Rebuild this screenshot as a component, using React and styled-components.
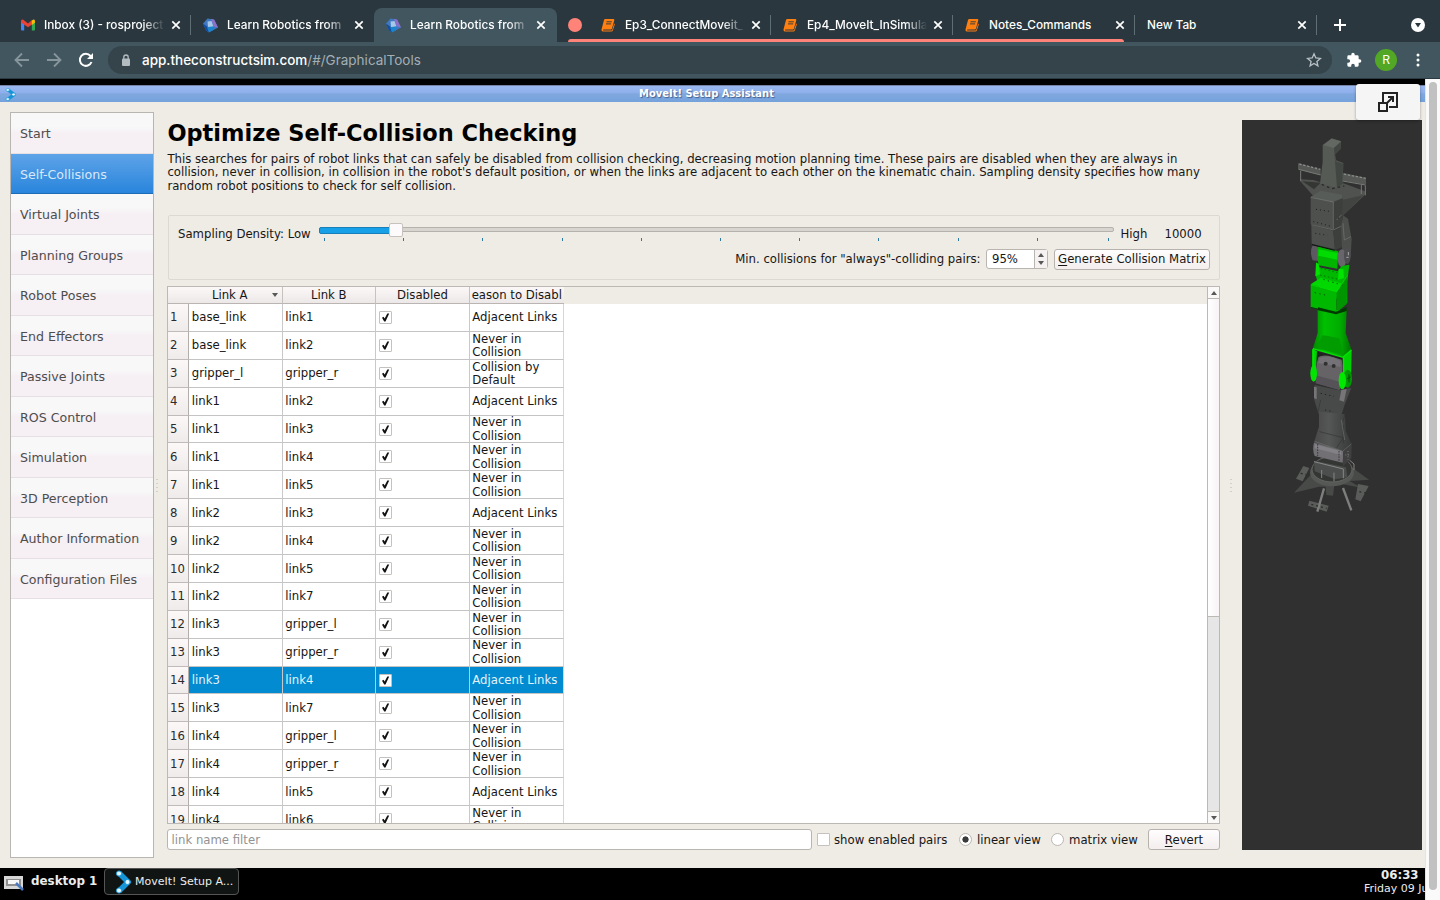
import React from "react";
import styled, { createGlobalStyle, css } from "styled-components";

const Global = createGlobalStyle`
  * { box-sizing: border-box; }
  html, body { margin: 0; padding: 0; background: #000; overflow: hidden; }
`;

const qtFont = `"DejaVu Sans", sans-serif`;
const uiFont = `Inter, Roboto, sans-serif`;

const Screen = styled.div`
  width: 1440px;
  height: 900px;
  overflow: hidden;
  display: flex;
  flex-direction: column;
  font-family: ${qtFont};
  font-size: 11.7px;
  color: #161616;
`;

/* ---------- browser chrome ---------- */

const TabStrip = styled.div`
  height: 42px;
  flex: none;
  display: flex;
  align-items: stretch;
  padding-left: 9px;
  background: #2a373e;
  font-family: ${uiFont};
`;

const Tab = styled.div`
  width: ${(p) => p.$w || 182}px;
  flex: none;
  display: flex;
  align-items: center;
  padding: 8px 9px 0 12px;
  gap: 9px;
  position: relative;
  color: #fff;
  ${(p) =>
    p.$active
      ? css`
          margin-top: 8px;
          padding-top: 0;
          padding-right: 10px;
          padding-left: 12px;
          background: #41565f;
          border-radius: 8px 8px 0 0;
        `
      : css`
          &::after {
            content: "";
            position: absolute;
            right: 0;
            top: 15px;
            width: 1px;
            height: 20px;
            background: ${p.$noSep ? "transparent" : "#5f6d75"};
          }
        `}
`;

const TabLabel = styled.span`
  flex: 1;
  min-width: 0;
  margin-right: -4px;
  padding-left: ${(p) => p.$pl ?? 1}px;
  overflow: hidden;
  white-space: nowrap;
  font-size: 11.8px;
  font-weight: 500;
  line-height: 18px;
  mask-image: ${(p) => (p.$full ? "none" : "linear-gradient(90deg, #000 82%, transparent 100%)")};
`;

const TabGroup = styled.div`
  display: flex;
  position: relative;
  padding-left: 21px;
  margin-left: 11px;
  &::before {
    content: "";
    position: absolute;
    left: 0;
    top: 18px;
    width: 14px;
    height: 14px;
    border-radius: 50%;
    background: #ff8378;
  }
  &::after {
    content: "";
    position: absolute;
    left: 0;
    right: 11px;
    bottom: 0;
    height: 3px;
    border-radius: 3px 3px 0 0;
    background: #ff8378;
  }
`;

const StripEnd = styled.div`
  flex: 1;
  display: flex;
  align-items: center;
  justify-content: space-between;
  padding: 8px 15px 0 16px;
`;

const Toolbar = styled.div`
  height: 37px;
  flex: none;
  display: flex;
  align-items: center;
  padding: 0 14px;
  background: #41565f;
  border-bottom: 1px solid #2c3a41;
  font-family: ${uiFont};
`;

const NavIcons = styled.div`
  display: flex;
  gap: 16px;
  width: 94px;
`;

const Omnibox = styled.div`
  flex: none;
  width: 1224px;
  height: 28px;
  display: flex;
  align-items: center;
  padding: 0 10px 0 13px;
  border-radius: 14px;
  background: #35444b;
`;

const Address = styled.span`
  flex: 1;
  margin-left: 11px;
  font-size: 13.5px;
  color: #a4afb4;
  b { font-weight: 500; color: #fff; }
`;

const ToolbarEnd = styled.div`
  flex: 1;
  display: flex;
  align-items: center;
  justify-content: space-between;
  margin: 0 0 0 14px;
`;

const Avatar = styled.span`
  width: 22px;
  height: 22px;
  border-radius: 50%;
  background: #52a725;
  color: #fff;
  font-size: 12px;
  line-height: 22px;
  text-align: center;
`;

/* ---------- remote desktop ---------- */

const Page = styled.div`
  flex: 1;
  min-height: 0;
  display: flex;
  position: relative;
`;

const Desktop = styled.div`
  width: 1425px;
  display: flex;
  flex-direction: column;
  background: #000;
  padding-top: 6px;
  overflow: hidden;
`;

const PageScroll = styled.div`
  width: 15px;
  background: #fafafa;
  border-left: 1px solid #e4e4e4;
  padding: 3px 2px 0 3px;
`;

const PageThumb = styled.div`
  width: 8px;
  height: 808px;
  border-radius: 4px;
  background: #c1c1c1;
`;

const TitleBar = styled.div`
  height: 17px;
  flex: none;
  display: flex;
  align-items: center;
  padding-left: 5px;
  border-top: 1px solid #7481a4;
  background: linear-gradient(#9ab8f0, #8fb0ec 40%, #80a8de 50%, #74a2dc);
`;

const Title = styled.div`
  flex: 1;
  text-align: center;
  padding: 0 28px 0 0;
  font-weight: 700;
  font-size: 9.95px;
  line-height: 14px;
  color: #fff;
  text-shadow: 1px 1px 1px #44608f;
`;

const Win = styled.div`
  height: 766px;
  flex: none;
  display: flex;
  background: #efebe5;
  padding: 10px 3px 10px 10px;
`;

const SideList = styled.div`
  width: 144px;
  flex: none;
  background: #fff;
  border: 1px solid #b9b5b1;
`;

const SideItem = styled.div`
  height: 40.5px;
  padding: 1.600px 9px 0;
  display: flex;
  align-items: center;
  font-size: 12.6px;
  white-space: nowrap;
  color: ${(p) => (p.$on ? "#d9e8f8" : "#4d4d4d")};
  background: ${(p) =>
    p.$on ? "linear-gradient(#5ea3e8, #2985dc)" : "linear-gradient(#f8f8f8 0 35%, #f6f0f5 50%)"};
  border-bottom: 1px solid ${(p) => (p.$on ? "#1e6cb5" : "#e6e0e5")};
`;

const Grip = styled.div`
  width: ${(p) => p.$w}px;
  flex: none;
  display: flex;
  align-items: center;
  justify-content: center;
  padding: 4px ${(p) => p.$shift || 0}px 0 0;
  &::before {
    content: "";
    width: 2px;
    height: 16px;
    background: repeating-linear-gradient(#d3cfca 0 1px, transparent 1px 4px);
  }
`;

const Main = styled.div`
  width: 1053px;
  flex: none;
  display: flex;
  flex-direction: column;
`;

const Heading = styled.h1`
  margin: 5px 0 0;
  height: 33px;
  padding-left: 0.4px;
  font-size: 22.48px;
  line-height: 32px;
  font-weight: 700;
  color: #000;
`;

const Intro = styled.p`
  margin: 2.500px 0 0;
  height: 62.500px;
  padding-left: 0.4px;
  font-size: 11.71px;
  line-height: 13.5px;
  white-space: pre;
`;

const Group = styled.div`
  height: 65px;
  margin-left: 1px;
  border: 1px solid #dcd9d4;
  border-radius: 2px;
  padding: 7px 9px 0 9px;
`;

const DensityRow = styled.div`
  display: flex;
  height: 24px;
  line-height: 22px;
`;

const DensityLabel = styled.span`
  width: 141px;
  white-space: nowrap;
`;

const SliderBox = styled.div`
  width: 795px;
  padding-top: 4px;
`;

const Track = styled.div`
  height: 5px;
  border: 1px solid #b5b2ad;
  border-radius: 2px;
  background: #d8d5d0;
  position: relative;
  &::before {
    content: "";
    position: absolute;
    left: -1px;
    top: -1px;
    width: 74px;
    height: 5px;
    border-radius: 2px;
    border: 1px solid #197fb9;
    background: #17a0e8;
  }
  &::after {
    content: "";
    position: absolute;
    left: 69px;
    top: -5px;
    width: 12px;
    height: 12px;
    border-radius: 2px;
    border: 1px solid #c6c2be;
    background: #fdfafb;
  }
`;

const Ticks = styled.div`
  display: flex;
  margin: 6px 0 0 5px;
`;

const Tick = styled.span`
  flex: none;
  width: ${(p) => p.$w}px;
  height: 3px;
  border-left: 1px solid #2b7aa3;
`;

const HighLabel = styled.span`
  margin-left: 6.500px;
  width: 44px;
`;

const CollRow = styled.div`
  display: flex;
  align-items: center;
  justify-content: flex-end;
  height: 22px;
  margin-top: 1px;
`;

const Spin = styled.div`
  width: 62px;
  height: 20px;
  margin: 0 6px 0 5.500px;
  display: flex;
  border: 1px solid #b9b5b1;
  border-radius: 3px;
  background: #fff;
  line-height: 18px;
  padding-left: 5px;
  justify-content: space-between;
`;

const SpinArrows = styled.div`
  width: 13px;
  border-left: 1px solid #b9b5b1;
  background: #f6f2f2;
  display: flex;
  flex-direction: column;
  align-items: center;
  justify-content: center;
  gap: 4px;
`;

const Arrow = styled.i`
  width: 0;
  height: 0;
  border: 3.5px solid transparent;
  ${(p) =>
    p.$up
      ? css`border-top: 0; border-bottom: 4px solid #585858;`
      : css`border-bottom: 0; border-top: 4px solid #585858;`}
`;

const Button = styled.button`
  width: ${(p) => p.$w}px;
  height: 21px;
  padding: 0;
  border: 1px solid #b7b2ae;
  border-radius: 3px;
  background: linear-gradient(#fffdfe, #f4eeee);
  font: inherit;
  color: inherit;
  line-height: 18px;
  white-space: nowrap;
  u { text-underline-offset: 2px; }
`;

const TableFrame = styled.div`
  margin-top: 6px;
  height: 538px;
  border: 1px solid #bcb8b4;
  background: #fff;
  display: flex;
  overflow: hidden;
`;

const TableArea = styled.div`
  flex: 1;
  overflow: hidden;
`;

const rowGrid = css`
  display: grid;
  grid-template-columns: 21px 93.5px 93.5px 94px 93.6px;
`;

const HeadRow = styled.div`
  ${rowGrid}
  height: 17px;
  background: #efebe5;
`;

const HeadCell = styled.div`
  position: relative;
  display: flex;
  justify-content: center;
  overflow: hidden;
  white-space: nowrap;
  line-height: 16px;
  padding-right: ${(p) => p.$pr || 0}px;
  background: linear-gradient(#fdf8f8, #ece8e8);
  border-right: ${(p) => (p.$plain ? 0 : 1)}px solid #c6c2be;
  border-bottom: 1px solid #bab5b2;
`;

const SortMark = styled.span`
  position: absolute;
  right: 4px;
  top: 6px;
  display: flex;
`;

const Row = styled.div`
  ${rowGrid}
  grid-template-rows: 27.9px;
  height: 27.9px;
  color: ${(p) => (p.$on ? "#e4f2fb" : "#161616")};
  background: ${(p) =>
    p.$on ? "linear-gradient(90deg, #028bd0 0 395px, #fff 395px)" : "#fff"};
`;

const Cell = styled.div`
  display: flex;
  align-items: center;
  min-height: 0;
  height: 100%;
  padding: 1.600px 0 0 2.800px;
  line-height: 13.5px;
  border-right: 1px solid #c9c9c9;
  border-bottom: 1px solid #c4c4c4;
`;

const IndexCell = styled(Cell)`
  padding-left: 2px;
  color: #2b2b2b;
  border-right-color: #b3aeab;
  border-bottom-color: #c0bbb8;
  background: linear-gradient(#fdf8f8, #efebeb);
`;

const CheckCell = styled(Cell)`
  padding-top: 0;
`;

const Check = styled.span`
  width: 13px;
  height: 13px;
  flex: none;
  display: flex;
  align-items: center;
  justify-content: center;
  border: 1px solid #c5c1be;
  border-radius: 1px;
  background: #fff;
`;

const Scroll = styled.div`
  width: 12px;
  flex: none;
  display: flex;
  flex-direction: column;
  border-left: 1px solid #bcb8b4;
  background: #e6e6e6;
`;

const ScrollBtn = styled.div`
  height: 12px;
  flex: none;
  display: flex;
  align-items: center;
  justify-content: center;
  background: #fbf8f8;
  border: 0 solid #bcb8b4;
  border-width: ${(p) => (p.$up ? "0 0 1px" : "1px 0 0")};
`;

const ScrollThumb = styled.div`
  height: 318px;
  background: linear-gradient(90deg, #fff, #f8f3f5);
  border-bottom: 1px solid #bcb8b4;
`;

const Gap = styled.div`
  flex: 1;
`;

const BottomBar = styled.div`
  display: flex;
  align-items: center;
  height: 21px;
  margin-top: 5px;
`;

const Filter = styled.div`
  width: 645px;
  height: 21px;
  padding-left: 3.500px;
  border: 1px solid #b9b5b1;
  border-radius: 3px;
  background: #fff;
  color: #929292;
  line-height: 20px;
`;

const Option = styled.span`
  display: flex;
  align-items: center;
  gap: ${(p) => p.$gap}px;
  width: ${(p) => p.$w}px;
  margin-left: ${(p) => p.$ml}px;
  white-space: nowrap;
`;

const Radio = styled.span`
  width: 13px;
  height: 13px;
  flex: none;
  border-radius: 50%;
  border: 1px solid #bbb7b3;
  background: ${(p) => (p.$on ? "radial-gradient(circle, #3a3a3a 0 2.8px, #fff 3.4px)" : "#fff")};
`;

const Viewport = styled.div`
  width: 180px;
  flex: none;
  margin: 8px 0;
  background: #303030;
  svg { display: block; }
`;

const TaskBar = styled.div`
  flex: 1;
  display: flex;
  align-items: flex-start;
  padding-left: 4px;
  color: #ececec;
  background: #000;
`;

const DeskLabel = styled.div`
  margin-left: 7px;
  width: 73px;
  font-weight: 700;
  font-size: 11.9px;
  line-height: 26px;
  white-space: nowrap;
`;

const Task = styled.div`
  width: 135px;
  height: 27px;
  display: flex;
  align-items: center;
  gap: 4px;
  padding-left: 10px;
  border: 1px solid #555;
  border-radius: 4px;
  background: #101513;
  font-size: 11px;
  white-space: nowrap;
`;

const Clock = styled.div`
  width: 61px;
  margin-left: auto;
  padding-top: 0.500px;
  font-size: 11px;
  line-height: 13px;
  white-space: nowrap;
  overflow: hidden;
  b {
    display: block;
    padding: 0 0 0 17px;
    font-size: 11.8px;
    line-height: 13.500px;
  }
`;

const PopOut = styled.div`
  position: absolute;
  left: 1356px;
  top: 5px;
  width: 64px;
  height: 36px;
  border-radius: 3px;
  background: #f5f5f5;
  box-shadow: 0 1px 3px rgba(0, 0, 0, 0.35);
  display: flex;
  align-items: center;
  justify-content: center;
`;

/* ---------- icons ---------- */

const Close = () => (
  <svg width="12" height="12" viewBox="0 0 12 12" stroke="#fff" strokeWidth="1.7">
    <path d="M2.300 2.300l7.400 7.400M9.700 2.300l-7.400 7.400" />
  </svg>
);

const Gmail = () => (
  <svg width="14" height="12" viewBox="0 0 14 12">
    <path fill="#4285f4" d="M0 2v8.500q0 1 1 1h2.200V5z" />
    <path fill="#34a853" d="M14 2v8.500q0 1-1 1h-2.200V5z" />
    <path fill="#ea4335" d="M0 2Q0 .5 1.300.5q.6 0 1 .3L7 4.500 11 1v4.500L7 8.300 0 3.500z" />
    <path fill="#fbbc04" d="M10.800 1.500q3.200-2.300 3.200 1V3.500L10.800 6z" />
  </svg>
);

const Construct = () => (
  <svg width="15" height="15" viewBox="0 0 15 15">
    <path fill="#3f78c0" d="M4.500 .5L11 1.500 15 9.500 6 14.500 3 12.500 0 5.500z" />
    <path fill="#8d6fc6" d="M8 .8l3.300.9L15 9.500l-4-1z" />
    <path fill="#124a9c" d="M0 5.500l3 7L6 14.500 4.500 9z" />
    <path fill="#a6c6ea" d="M4.500 3.500l4-.5 2 5.500-5.500.5z" />
    <path fill="#1a86cc" d="M4 9.500l6.500-1L10 12l-4 2z" />
  </svg>
);

const Book = () => (
  <svg width="14" height="14" viewBox="0 0 14 14">
    <path fill="#ff7f11" d="M4.300 1h8.300q1 .2.700 1.200L11 10.500q-.3.900-1.200.9H2.500q-1 .4-.3 1h8.300l.7-.5 2-6.500q.8.5.5 1.300l-1.900 5.800q-.3 1-1.300 1H1.800Q.3 13.300.5 11.500L3 2q.3-.9 1.300-1z" />
    <path stroke="#2a373e" strokeWidth=".9" d="M5.500 3.800h5.300M5 5.900h5.200" />
  </svg>
);

const MoveItMark = ({ w, h }) => (
  <svg width={w} height={h} viewBox="0 0 16 24" preserveAspectRatio="none">
    <path d="M4 3l9 9-9 9" fill="none" stroke="#1595d8" strokeWidth="5.500" />
    <g fill="#e2f6ff" stroke="#1595d8">
      <circle cx="4" cy="3.500" r="2.600" />
      <circle cx="12.500" cy="12" r="2.600" />
      <circle cx="4" cy="20.500" r="2.600" />
    </g>
  </svg>
);

const Tickmark = () => (
  <svg width="9" height="9" viewBox="0 0 9 9">
    <path d="M1 4.700l1.500-.9 1.200 1.600L6.300.5h1.900L4.500 8.500H3.200z" fill="#111" />
  </svg>
);

const Robot = () => (
  <svg width="180" height="730" viewBox="0 0 180 730">
    {/* gripper and wrist */}
    <g transform="translate(28 0) scale(.33333)">
      <path fill="#505250" d="M90 178l40 2 40 12 50-2 65 24v10l-70 66v-50l-85-12-35-40z" />
      <path fill="#424442" d="M215 240l65-14-65 64z" />
      <path fill="#343634" d="M97 184l55 4-20 20z" />
      <path fill="#555855" d="M84 130l68 18v17l-68-17zM206 156l82 17v21l-82-14z" />
      <path stroke="#8a8d8a" strokeWidth="4" strokeDasharray="7 5" d="M88 132l63 16M210 160l77 15" />
      <path stroke="#777a77" strokeWidth="3" fill="none" d="M86 148l66 17M206 181l80 14M92 152v32M286 196v30M274 194v28" />
      <path fill="#555a55" d="M158 75l27-20 28 9-1 22-17 17 3 18 22 8-2 60-18 14-50-12 8-66z" />
      <path fill="#636863" d="M160 75l25-19 28 8-22 20z" />
      <path fill="#424642" d="M192 84l20-18v20l-17 18 2 20 22 7-2 60-16 12z" />
      <path stroke="#2a2c2a" strokeWidth="4" strokeDasharray="8 9" d="M155 193l30 13 38-8" fill="none" />
      <path fill="#585c58" d="M122 230l30-18 64 12v20l-26 10z" />
      <path fill="#4d504d" d="M122 232l68 14v84l-68-18zM124 315l66 17 5 56-70-17z" />
      <path fill="#3d3f3d" d="M190 246l28-12-2 85-26 12zM190 332l26-12 3 60-24 10z" />
      <path stroke="#777b77" strokeWidth="2" fill="none" d="M122 232l68 14v82M124 314l66 16 26-12M200 300l15-16" />
      <path stroke="#1c1e1c" strokeWidth="3" strokeDasharray="3 9" d="M130 305l58 15M138 268l40 6M136 340l36 6M205 296v-10" />
      <path fill="#4b4e4b" d="M219 286l15 10 11 62-3 52-22 25-4-50-3-62z" />
      <path stroke="#737673" strokeWidth="2" fill="none" d="M219 310l4 50 20-10" />
      {/* upper elbow */}
      <path fill="#5d5961" d="M128 376q-10 20 0 45l16 2V380z" />
      <path fill="#00b400" d="M145 378l60 16-3 52-56-10q-8-30-1-58z" />
      <path fill="#00dc00" d="M146 388l57 11v20l-58-12z" />
      <path stroke="#111" strokeWidth="3" d="M126 374l68 17" />
      <ellipse cx="216" cy="414" rx="14" ry="26" fill="#69656d" />
      <ellipse cx="232" cy="406" rx="10" ry="26" fill="#4e4d50" />
      <path stroke="#a9a8ac" strokeWidth="3" d="M235 396v10M229 412h7" />
      <path fill="#00b800" d="M138 426l10 16 56 12 10-16 24-4-6 50v66l-80-35-14-45z" />
      <path fill="#00e400" d="M138 428l8 3 4 32-14 6zM206 446l14 2 2 26-18 5z" />
      <path stroke="#007700" strokeWidth="3" strokeDasharray="5 7" d="M152 445l50 13M150 465l55 13" />
      <path fill="#00d800" d="M122 493l30-20 78 21-30 22z" />
      <path fill="#00b800" d="M122 493l78 22-2 65-76-18z" />
      <path fill="#009400" d="M200 516l32-50-2 86-32 28z" />
      <path stroke="#004c00" strokeWidth="3" strokeDasharray="4 10" d="M134 518l36 8M160 478l58 18" />
      <path stroke="#00ef00" strokeWidth="2" fill="none" d="M123 494l77 21 32-48" />
      <path stroke="#004800" strokeWidth="3" fill="none" d="M122 562l76 18" />
    </g>
    {/* forearm, shoulder and base */}
    <g transform="translate(28 190) scale(.33333)">
      <linearGradient id="arm"><stop stopColor="#008600" /><stop offset=".3" stopColor="#00c000" /><stop offset=".72" stopColor="#00aa00" /><stop offset="1" stopColor="#006f00" /></linearGradient>
      <linearGradient id="steel"><stop stopColor="#484848" /><stop offset=".4" stopColor="#555656" /><stop offset="1" stopColor="#383a39" /></linearGradient>
      <path fill="url(#arm)" d="M143 0h87l-3 70 18 50-22 22-95-25 15-48z" />
      <path fill="#003900" d="M144-8l54 13 32-14v12l-32 10-54-12z" />
      <path fill="#009c00" d="M158 75l50 10 12 50-82-22z" />
      <path fill="#202220" d="M137 124l80 20v40l-78-30z" />
      <path fill="#00d000" d="M126 116l15 8-3 50-12 4zM218 142l27-22-2 90-22 20z" />
      <path fill="#656366" d="M145 142q8-8 30-5l40 12q8 32-6 90l-70-20q-4-50 6-77z" />
      <path fill="#747276" d="M150 143q30-10 62 10v18l-68-12z" />
      <path fill="#555357" d="M137 196l75 20-5 24-70-20z" />
      <circle cx="167" cy="161" r="6" fill="#303030" />
      <circle cx="191" cy="168" r="6" fill="#303030" />
      <ellipse cx="131" cy="190" rx="10" ry="25" fill="#00e400" />
      <ellipse cx="233" cy="206" rx="13" ry="27" fill="#009a00" />
      <ellipse cx="217" cy="212" rx="11" ry="26" fill="#00ea00" />
      <path stroke="#00e600" strokeWidth="4" fill="none" d="M129 116l90 26 25-22M131 116v50M221 142v48" />
      <path stroke="#004b00" strokeWidth="3" d="M237 193v24M230 207l12-6" />
      <path fill="#484a49" d="M134 225l72 16 38-7-20 50-14 44-64-16-14-44z" />
      <path fill="#777578" d="M132 230l8 2v36l-8-4zM214 240l16-3-8 38-14-4z" />
      <path stroke="#222" strokeWidth="3" strokeDasharray="4 9" d="M152 250l40 9M165 300l26 5" />
      <path fill="url(#steel)" d="M147 305l78 8 2 50 18 40-26 25-88-28 16-50z" />
      <path stroke="#333" strokeWidth="2" fill="none" d="M152 270l-8 35M219 335l8-30M148 365l72 18-20 30M220 345v55" />
      <path stroke="#707270" strokeWidth="2" fill="none" d="M134 394l84 30 26-22M214 330l10 60" />
      {/* base plate, legs and clamps */}
      <path fill="#484a48" d="M122 495l-50 53 75-18 20 0 2 25 20 2 4-32 20-4 60 12-34-20 58-4-50-36z" />
      <path fill="#595c59" d="M100 468l18 6-20 40-20-8zM264 522l32 6-24 46-16-6zM118 572l58 15-6 18-56-18z" />
      <ellipse cx="186" cy="488" rx="66" ry="41" fill="#565856" />
      <ellipse cx="186" cy="478" rx="60" ry="38" fill="#343634" stroke="#626462" strokeWidth="3" />
      <path fill="#4b4e4c" d="M132 452l96 20 4 30-36 6-62-24z" />
      <path stroke="#858885" strokeWidth="3" fill="none" d="M132 455l88 22v28M155 480v24M192 488v26M238 450l14 12v18" />
      <path stroke="#7c7f7c" strokeWidth="7" d="M162 535l-20 70M219 534l25 67" />
      <path stroke="#2b2d2b" strokeWidth="4" strokeDasharray="6 9" d="M92 490l18 4M268 545l20 4M124 583l46 12" />
      <path fill="#727074" d="M132 398l88 26-2 34-84-20q-8-20-2-40z" />
      <path fill="#838185" d="M134 402l80 22v11l-80-20z" />
      <path stroke="#3a3a3a" strokeWidth="3" strokeDasharray="5 3" fill="none" d="M143 402v36M207 423v31" />
      <path fill="#3f403f" d="M219 425l26-22-1 42-25 23z" />
      <path stroke="#999" strokeWidth="2" strokeDasharray="3 5" d="M234 423v26M226 435h14" />
    </g>
  </svg>
);

/* ---------- data ---------- */

const AL = "Adjacent Links";
const NC = "Never in\nCollision";
const rows = [
  ["base_link", "link1", AL],
  ["base_link", "link2", NC],
  ["gripper_l", "gripper_r", "Collision by\nDefault"],
  ["link1", "link2", AL],
  ["link1", "link3", NC],
  ["link1", "link4", NC],
  ["link1", "link5", NC],
  ["link2", "link3", AL],
  ["link2", "link4", NC],
  ["link2", "link5", NC],
  ["link2", "link7", NC],
  ["link3", "gripper_l", NC],
  ["link3", "gripper_r", NC],
  ["link3", "link4", AL],
  ["link3", "link7", NC],
  ["link4", "gripper_l", NC],
  ["link4", "gripper_r", NC],
  ["link4", "link5", AL],
  ["link4", "link6", NC],
];

const Reason = styled(Cell)`
  white-space: pre;
  padding-left: 2.300px;
  border-right-color: #d6d6d6;
`;

const steps = [
  "Start", "Self-Collisions", "Virtual Joints", "Planning Groups", "Robot Poses", "End Effectors",
  "Passive Joints", "ROS Control", "Simulation", "3D Perception", "Author Information", "Configuration Files",
];

const ticks = [79.2, 79.2, 79.2, 79.2, 79.2, 79.2, 79.2, 79.2, 79.2, 71.2, 1];

const intro = `This searches for pairs of robot links that can safely be disabled from collision checking, decreasing motion planning time. These pairs are disabled when they are always in
collision, never in collision, in collision in the robot's default position, or when the links are adjacent to each other on the kinematic chain. Sampling density specifies how many
random robot positions to check for self collision.`;

export default function App() {
  return (
    <Screen>
      <Global />
      <TabStrip>
        <Tab><Gmail /><TabLabel $pl={0}>Inbox (3) - rosproject</TabLabel><Close /></Tab>
        <Tab $noSep $w={183}><Construct /><TabLabel $pl={0}>Learn Robotics from</TabLabel><Close /></Tab>
        <Tab $active $w={183}><Construct /><TabLabel $pl={0}>Learn Robotics from</TabLabel><Close /></Tab>
        <TabGroup>
          <Tab><Book /><TabLabel>Ep3_ConnectMoveit_</TabLabel><Close /></Tab>
          <Tab><Book /><TabLabel>Ep4_MoveIt_InSimula</TabLabel><Close /></Tab>
          <Tab><Book /><TabLabel $full>Notes_Commands</TabLabel><Close /></Tab>
        </TabGroup>
        <Tab><TabLabel $full $pl={0}>New Tab</TabLabel><Close /></Tab>
        <StripEnd>
          <svg width="14" height="14" viewBox="0 0 14 14" stroke="#fff" strokeWidth="2"><path d="M7 1v12M1 7h12" /></svg>
          <svg width="14" height="14" viewBox="0 0 14 14"><circle cx="7" cy="7" r="7" fill="#fff" /><path d="M4 5h6L7 9.500z" fill="#2a373e" /></svg>
        </StripEnd>
      </TabStrip>
      <Toolbar>
        <NavIcons>
          <svg width="16" height="16" viewBox="0 0 16 16" fill="none" stroke="#87959c" strokeWidth="1.800"><path d="M15 8H2M8 1.500L1.500 8 8 14.500" /></svg>
          <svg width="16" height="16" viewBox="0 0 16 16" fill="none" stroke="#87959c" strokeWidth="1.800"><path d="M1 8h13M8 1.500L14.500 8 8 14.500" /></svg>
          <svg width="16" height="16" viewBox="0 0 16 16" fill="none" stroke="#fff" strokeWidth="2"><path d="M13.500 10A6 6 0 1 1 12.500 4L14 5.500" /><path d="M15 1v6H9z" fill="#fff" stroke="none" /></svg>
        </NavIcons>
        <Omnibox>
          <svg width="10" height="13" viewBox="0 0 10 13"><rect x="1" y="4.500" width="8" height="7.500" rx="1" fill="#b3bcc1" /><path d="M2.800 5V3.200a2.200 2.200 0 0 1 4.400 0V5" fill="none" stroke="#b3bcc1" strokeWidth="1.300" /></svg>
          <Address><b>app.theconstructsim.com</b>/#/GraphicalTools</Address>
          <svg width="16" height="16" viewBox="0 0 16 16" fill="none" stroke="#b8c1c5" strokeWidth="1.300"><path d="M8 1.800l1.800 4.200 4.600.4-3.500 3 1 4.500L8 11.500l-3.900 2.400 1-4.500-3.500-3 4.600-.4z" /></svg>
        </Omnibox>
        <ToolbarEnd>
          <svg width="16" height="16" viewBox="0 0 24 24" fill="#fff"><path d="M20.500 11H19V7a2 2 0 0 0-2-2h-4V3.500a2.500 2.500 0 0 0-5 0V5H4a2 2 0 0 0-2 2v3.800h1.500a2.700 2.700 0 0 1 0 5.400H2V20a2 2 0 0 0 2 2h3.800v-1.500a2.700 2.700 0 0 1 5.400 0V22H17a2 2 0 0 0 2-2v-4h1.500a2.500 2.500 0 0 0 0-5z" /></svg>
          <Avatar>R</Avatar>
          <svg width="16" height="16" viewBox="0 0 16 16" fill="#fff"><circle cx="8" cy="3" r="1.500" /><circle cx="8" cy="8" r="1.500" /><circle cx="8" cy="13" r="1.500" /></svg>
        </ToolbarEnd>
      </Toolbar>

      <Page>
        <Desktop>
          <TitleBar>
            <MoveItMark w={11} h={13} />
            <Title>MoveIt! Setup Assistant</Title>
          </TitleBar>
          <Win>
            <SideList>
              {steps.map((s, i) => <SideItem key={s} $on={i === 1}>{s}</SideItem>)}
            </SideList>
            <Grip $w={13} $shift={7} />
            <Main>
              <Heading>Optimize Self-Collision Checking</Heading>
              <Intro>{intro}</Intro>
              <Group>
                <DensityRow>
                  <DensityLabel>Sampling Density: Low</DensityLabel>
                  <SliderBox>
                    <Track />
                    <Ticks>{ticks.map((w, i) => <Tick key={i} $w={w} />)}</Ticks>
                  </SliderBox>
                  <HighLabel>High</HighLabel>
                  <span>10000</span>
                </DensityRow>
                <CollRow>
                  Min. collisions for "always"-colliding pairs:
                  <Spin>95%<SpinArrows><Arrow $up /><Arrow /></SpinArrows></Spin>
                  <Button $w={156}><u>G</u>enerate Collision Matrix</Button>
                </CollRow>
              </Group>
              <TableFrame>
                <TableArea>
                  <HeadRow>
                    <HeadCell $plain />
                    <HeadCell $pr={11}>Link A<SortMark><Arrow /></SortMark></HeadCell>
                    <HeadCell>Link B</HeadCell>
                    <HeadCell>Disabled</HeadCell>
                    <HeadCell $plain>eason to Disabl</HeadCell>
                  </HeadRow>
                  {rows.map(([a, b, why], i) => (
                    <Row key={i} $on={i === 13}>
                      <IndexCell>{i + 1}</IndexCell>
                      <Cell>{a}</Cell>
                      <Cell>{b}</Cell>
                      <CheckCell><Check><Tickmark /></Check></CheckCell>
                      <Reason>{why}</Reason>
                    </Row>
                  ))}
                </TableArea>
                <Scroll>
                  <ScrollBtn $up><Arrow $up /></ScrollBtn>
                  <ScrollThumb />
                  <Gap />
                  <ScrollBtn><Arrow /></ScrollBtn>
                </Scroll>
              </TableFrame>
              <BottomBar>
                <Filter>link name filter</Filter>
                <Option $gap={4} $w={131} $ml={5}><Check />show enabled pairs</Option>
                <Option $gap={5} $w={84} $ml={11}><Radio $on />linear view</Option>
                <Option $gap={5} $w={89} $ml={8}><Radio />matrix view</Option>
                <Gap />
                <Button $w={72}><u>R</u>evert</Button>
              </BottomBar>
            </Main>
            <Grip $w={22} />
            <Viewport><Robot /></Viewport>
          </Win>
          <TaskBar>
            <svg width="20" height="26" viewBox="0 0 20 26">
              <path fill="#d7d7d7" d="M0 8h19v13H0z" />
              <path fill="#8f8f8f" d="M2 11h15v7H2z" />
              <path fill="#f7f7f7" d="M4 12h11v4H4z" />
              <path d="M12 15l7 7" stroke="#4b79bd" strokeWidth="2.500" />
            </svg>
            <DeskLabel>desktop 1</DeskLabel>
            <Task><MoveItMark w={16} h={24} />MoveIt! Setup A...</Task>
            <Clock><b>06:33</b>Friday 09 Jul</Clock>
          </TaskBar>
        </Desktop>
        <PageScroll><PageThumb /></PageScroll>
        <PopOut>
          <svg width="20" height="20" viewBox="0 0 20 20" fill="none" stroke="#222" strokeWidth="2">
            <path d="M5 10V1h14v14h-8" />
            <path d="M1 11h8v8H1zM9 11l6-6M10 5h5v5" />
          </svg>
        </PopOut>
      </Page>
    </Screen>
  );
}
